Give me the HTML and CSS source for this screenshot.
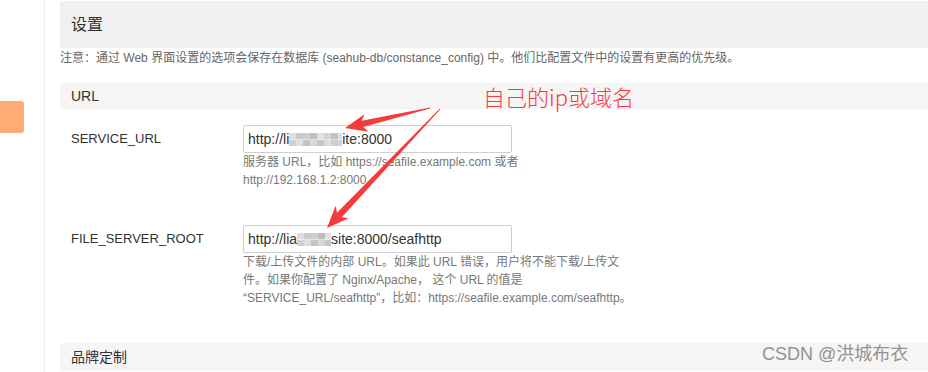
FILE: index.html
```html
<!DOCTYPE html>
<html lang="zh-CN">
<head>
<meta charset="utf-8">
<title>设置</title>
<link rel="stylesheet" href="styles.css">
</head>
<body>
<div class="page">
  <aside class="sidebar"><div class="nav-active"></div></aside>
  <main class="main">
    <div class="page-title">设置</div>
    <p class="notice">注意：通过 Web 界面设置的选项会保存在数据库 (seahub-db/constance_config) 中。他们比配置文件中的设置有更高的优先级。</p>
    <section class="group">
      <h3 class="group-title">URL</h3>
      <div class="setting">
        <div class="setting-name">SERVICE_URL</div>
        <div class="setting-field">
          <div class="text-input">http://li<span class="mosaic m1"></span>ite:8000</div>
          <p class="help">服务器 URL，比如 https://seafile.example.com 或者<br>http://192.168.1.2:8000</p>
        </div>
      </div>
      <div class="setting">
        <div class="setting-name">FILE_SERVER_ROOT</div>
        <div class="setting-field">
          <div class="text-input">http://lia<span class="mosaic m2"></span>site:8000/seafhttp</div>
          <p class="help">下载/上传文件的内部 URL。如果此 URL 错误，用户将不能下载/上传文<br>件。如果你配置了 Nginx/Apache， 这个 URL 的值是<br>“SERVICE_URL/seafhttp”，比如：https://seafile.example.com/seafhttp。</p>
        </div>
      </div>
    </section>
    <section class="group brand">
      <h3 class="group-title">品牌定制</h3>
    </section>
  </main>
  <div class="annot-layer">
    <svg class="arrows" width="928" height="372" viewBox="0 0 928 372">
      <polygon points="429.9,107.5 361.8,120.8 364.4,114.2 345,128 368.4,131.7 363.2,127.0 430.1,108.5"/>
      <polygon points="439.6,108.7 337.0,212.7 335.6,205.8 327,228 348.7,218.2 341.8,217.2 440.4,109.3"/>
    </svg>
    <div class="annot-text">自己的ip或域名</div>
    <div class="watermark">CSDN @洪城布衣</div>
  </div>
</div>
</body>
</html>
```
FILE: styles.css
```css
html, body {
  margin: 0;
  padding: 0;
  background: #fff;
}
body {
  font-family: "Liberation Sans", "Noto Sans CJK SC", sans-serif;
  color: #333;
  overflow: hidden;
}
.page {
  position: relative;
  display: flex;
  width: 928px;
  height: 372px;
  overflow: hidden;
}
.sidebar {
  flex: none;
  width: 44px;
  border-right: 1px solid #ececec;
}
.nav-active {
  margin-top: 101px;
  width: 24px;
  height: 32px;
  background: #ffab73;
  border-radius: 0 3px 3px 0;
}
.main {
  flex: 1;
  margin-left: 15px;
}
.page-title {
  margin-top: 1px;
  height: 47px;
  line-height: 47px;
  padding-left: 11px;
  background: #f0f0f0;
  font-size: 16px;
  color: #333;
}
.notice {
  margin: 0;
  font-size: 12px;
  line-height: 20px;
  color: #666;
  white-space: nowrap;
}
.group-title {
  margin: 15px 0 0;
  height: 26px;
  line-height: 26px;
  padding-left: 11px;
  background: #f5f5f5;
  font-size: 14px;
  font-weight: normal;
  color: #333;
}
.brand .group-title {
  margin-top: 36px;
  height: 28px;
  line-height: 28px;
}
.setting {
  display: flex;
  margin-top: 16px;
  padding-left: 11px;
}
.setting + .setting {
  margin-top: 36px;
}
.setting-name {
  flex: none;
  width: 172px;
  line-height: 28px;
  font-size: 13px;
  color: #333;
}
.text-input {
  box-sizing: border-box;
  width: 269px;
  height: 28px;
  border: 1px solid #cfcfcf;
  border-radius: 2px;
  padding: 0 4px;
  line-height: 26px;
  font-size: 14px;
  color: #333;
  white-space: nowrap;
  overflow: hidden;
}
.mosaic {
  display: inline-block;
  height: 13px;
  vertical-align: -2px;
  filter: blur(0.6px);
  background:
    linear-gradient(90deg, #dedede 0 7px, #c6cbcf 7px 14px, #d6ccc7 14px 21px, #bfbfbf 21px 28px, #e2e2e2 28px 35px, #ccd5db 35px 42px, #c2c2c2 42px 49px, #dfdfdf 49px 100%) top / 100% 50% no-repeat,
    linear-gradient(90deg, #d0d0d0 0 7px, #e0e0e0 7px 14px, #c1c5c8 14px 21px, #d9d9d9 21px 28px, #c6c6c6 28px 35px, #dddddd 35px 42px, #c9d0d5 42px 49px, #d4d4d4 49px 100%) bottom / 100% 50% no-repeat;
}
.m1 { width: 53px; }
.m2 { width: 34px; }
.help {
  margin: 0;
  width: 400px;
  font-size: 12px;
  line-height: 18px;
  color: #777;
}
.annot-layer {
  position: absolute;
  left: 0;
  top: 0;
  width: 928px;
  height: 372px;
  pointer-events: none;
}
.arrows {
  position: absolute;
  left: 0;
  top: 0;
}
.arrows polygon {
  fill: #f63b3b;
}
.annot-text {
  position: absolute;
  left: 483px;
  top: 84px;
  font-family: "Noto Sans CJK SC", sans-serif;
  font-size: 22px;
  font-weight: 300;
  line-height: 24px;
  color: #f83c3c;
  white-space: nowrap;
}
.watermark {
  position: absolute;
  left: 762px;
  top: 344px;
  font-size: 18px;
  line-height: 20px;
  color: #929292;
  white-space: nowrap;
}
```
